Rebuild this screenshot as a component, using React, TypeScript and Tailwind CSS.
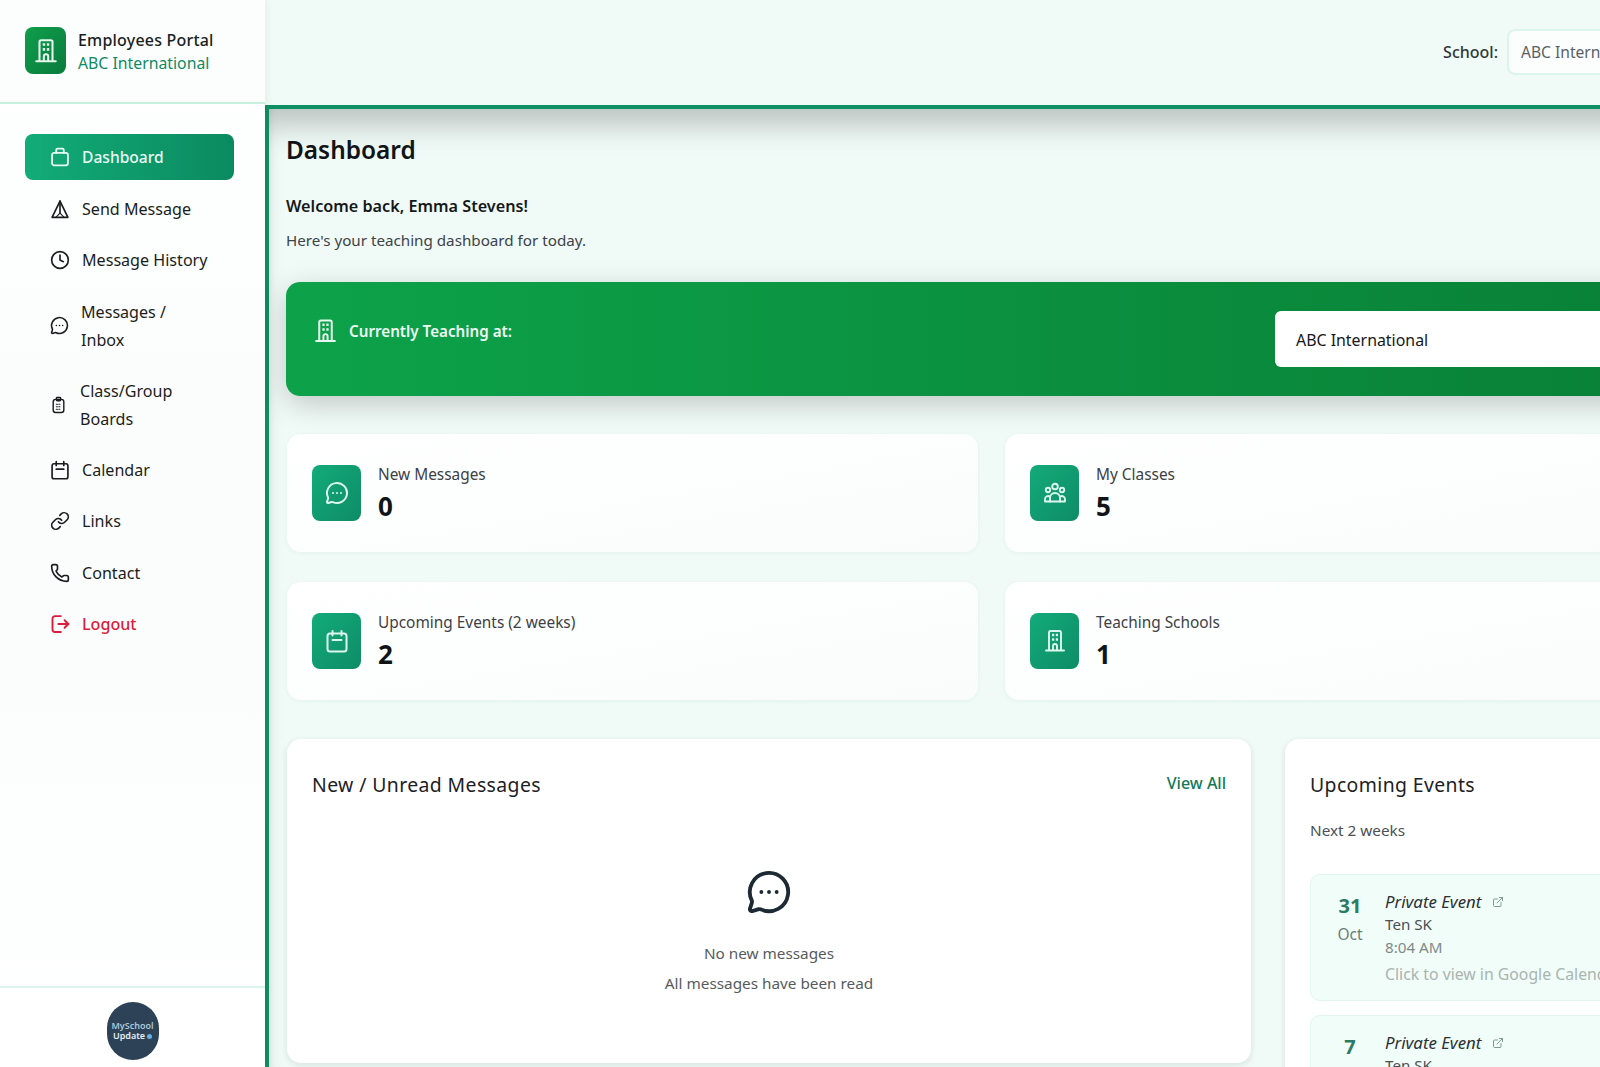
import { Clock, Link, MessageCircleMore, ExternalLink, Phone } from "lucide-react"

function BuildingIcon({ className }: { className?: string }) {
  return (
    <svg viewBox="0 0 24 24" fill="none" stroke="currentColor" strokeWidth="1.9" strokeLinecap="round" strokeLinejoin="round" className={className}>
      <path d="M6 21V3.5A1.5 1.5 0 0 1 7.5 2h9A1.5 1.5 0 0 1 18 3.5V21" />
      <path d="M3 21.5h18" />
      <path d="M10 21v-4a2 2 0 0 1 4 0v4" />
      <path d="M9 6h2.2M12.8 6H15M9 10.5h2.2M12.8 10.5H15" strokeWidth="2.4" strokeLinecap="butt" />
    </svg>
  )
}

function BriefcaseIcon({ className }: { className?: string }) {
  return (
    <svg viewBox="0 0 24 24" fill="none" stroke="currentColor" strokeWidth="2.2" strokeLinecap="round" strokeLinejoin="round" className={className}>
      <rect x="2.5" y="7" width="19" height="15" rx="2.5" />
      <path d="M7.5 7V3.5A1.5 1.5 0 0 1 9 2h6a1.5 1.5 0 0 1 1.5 1.5V7" />
    </svg>
  )
}

function SendIcon({ className }: { className?: string }) {
  return (
    <svg viewBox="0 0 24 24" fill="none" stroke="currentColor" strokeWidth="2" strokeLinecap="round" strokeLinejoin="round" className={className}>
      <path d="M12 2.5 2.5 22h19L12 2.5Z" />
      <path d="M12 2.5V17" />
      <path d="m12 17-5 5M12 17l5 5" strokeWidth="1.4" />
    </svg>
  )
}

function CalendarIcon({ className }: { className?: string }) {
  return (
    <svg viewBox="0 0 24 24" fill="none" stroke="currentColor" strokeWidth="2" strokeLinecap="round" strokeLinejoin="round" className={className}>
      <rect x="2.5" y="4.5" width="19" height="18" rx="2.5" />
      <path d="M7.5 2v4.5M16.5 2v4.5" />
      <path d="M7.5 11h9" />
    </svg>
  )
}

function BoardIcon({ className }: { className?: string }) {
  return (
    <svg viewBox="0 0 24 24" fill="none" stroke="currentColor" strokeWidth="2" strokeLinecap="round" strokeLinejoin="round" className={className}>
      <rect x="4.5" y="4" width="15" height="18.5" rx="3.5" />
      <rect x="9" y="1.5" width="6" height="4.5" rx="1" />
      <path d="M9 11h6M9 14.5h6M9 18h6" strokeWidth="1.6" strokeDasharray="1.5 2" />
    </svg>
  )
}

function LogoutIcon({ className }: { className?: string }) {
  return (
    <svg viewBox="0 0 24 24" fill="none" stroke="currentColor" strokeWidth="2.3" strokeLinecap="round" strokeLinejoin="round" className={className}>
      <path d="M13 2.5H6a3 3 0 0 0-3 3v13a3 3 0 0 0 3 3h7" />
      <path d="M10 12h12" />
      <path d="m17.5 7.5 4.5 4.5-4.5 4.5" />
    </svg>
  )
}

function GroupIcon({ className }: { className?: string }) {
  return (
    <svg viewBox="0 0 24 24" fill="none" stroke="currentColor" strokeWidth="1.9" strokeLinecap="round" strokeLinejoin="round" className={className}>
      <circle cx="12" cy="5.5" r="2.8" />
      <circle cx="5" cy="9" r="2.2" />
      <circle cx="19" cy="9" r="2.2" />
      <path d="M7 20.5V17a5 5 0 0 1 10 0v3.5Z" />
      <path d="M7 20.5H2v-2.5a3 3 0 0 1 5-2.2M17 20.5h5v-2.5a3 3 0 0 0-5-2.2" />
    </svg>
  )
}

const navItems = [
  { label: "Send Message", icon: SendIcon, gap: "gap-[12px]", size: "w-[20px] h-[20px]" },
  { label: "Message History", icon: Clock, gap: "gap-[12px]", size: "w-[20px] h-[20px]" },
  { label: "Messages / Inbox", icon: MessageCircleMore, gap: "gap-[12px]", size: "w-[19px] h-[19px]", wrap: true },
  { label: "Class/Group Boards", icon: BoardIcon, gap: "gap-[13px]", size: "w-[17px] h-[20px]", wrap: true },
  { label: "Calendar", icon: CalendarIcon, gap: "gap-[12px]", size: "w-[20px] h-[20px]" },
  { label: "Links", icon: Link, gap: "gap-[12px]", size: "w-[20px] h-[20px]" },
  { label: "Contact", icon: Phone, gap: "gap-[12px]", size: "w-[20px] h-[20px]" },
]

function Sidebar() {
  return (
    <aside className="w-[265px] shrink-0 h-full flex flex-col bg-gradient-to-b from-white via-[#fafdfc] to-white shadow-[2px_0_8px_rgba(0,0,0,0.05)] relative z-10">
      <div className="h-[104px] shrink-0 border-b-2 border-[#c8f0df] flex items-start pl-[25px] pt-[27px] gap-[12px] bg-[#fbfefd]">
        <div className="w-[41px] h-[47px] rounded-[8px] bg-gradient-to-br from-[#0f9f4c] to-[#0a7a3c] flex items-center justify-center text-[#e6f7ee]">
          <BuildingIcon className="w-[26px] h-[28px]" />
        </div>
        <div className="pt-[1px]">
          <div className="text-[16px] leading-[24px] font-medium text-[#1c1f22] tracking-[0.2px]">Employees Portal</div>
          <div className="text-[15.8px] leading-[22px] text-[#0f8a62]">ABC International</div>
        </div>
      </div>
      <nav className="flex-1 px-[25px] pt-[30px] flex flex-col">
        <a className="h-[46px] mb-[3px] w-[209px] rounded-[8px] bg-gradient-to-r from-[#12ac78] to-[#0b8a60] flex items-center pl-[25px] pt-[2px] gap-[12px] text-[#e8fbf3] text-[15.6px] font-medium">
          <BriefcaseIcon className="w-[20px] h-[20px] -mt-[2px]" />
          Dashboard
        </a>
        {navItems.map((item) => (
          <a
            key={item.label}
            className={`w-[209px] flex items-center pl-[25px] ${item.gap} text-[16.1px] text-[#1a1d20] ${item.wrap ? "min-h-[79px]" : "h-[51.5px]"}`}
          >
            <item.icon className={`${item.size} shrink-0`} strokeWidth={2} />
            <span className={item.wrap ? "w-[110px] leading-[28px]" : ""}>{item.label}</span>
          </a>
        ))}
        <a className="w-[209px] h-[51.5px] flex items-center pl-[25px] gap-[12px] text-[16.1px] font-medium text-[#dc1c3a]">
          <LogoutIcon className="w-[20px] h-[20px]" />
          Logout
        </a>
      </nav>
      <div className="h-[81px] shrink-0 border-t-2 border-[#dcf5ea] flex justify-center pt-[14px] bg-white">
        <div className="w-[52px] h-[58px] rounded-full bg-[#2d4257] flex flex-col items-center justify-center text-[9px] leading-[10px] font-semibold">
          <span className="text-[#a9c6da]">MySchool</span>
          <span className="flex items-center gap-[2px] text-[#e4eef4]">
            Update
            <span className="w-[5px] h-[5px] rounded-full bg-[#5fb3e8]" />
          </span>
        </div>
      </div>
    </aside>
  )
}

function StatCard({ label, value, icon: Icon }: { label: string; value: string; icon: React.ComponentType<{ className?: string }> }) {
  return (
    <div className="h-[118px] rounded-[14px] bg-gradient-to-br from-white to-[#fafcfc] shadow-[0_1px_4px_rgba(20,120,90,0.06)] flex items-center pl-[25px] gap-[17px]">
      <div className="w-[49px] h-[56px] rounded-[8px] bg-gradient-to-br from-[#13ab79] to-[#0e8c66] flex items-center justify-center text-[#def7ee]">
        <Icon className="w-[24px] h-[24px]" />
      </div>
      <div className="pt-[1px]">
        <div className="text-[15.4px] leading-[24px] text-[#3c4146]">{label}</div>
        <div className="text-[26px] leading-[38px] font-bold text-[#111417]">{value}</div>
      </div>
    </div>
  )
}

function EventCard({ day, month }: { day: string; month: string }) {
  return (
    <div className="h-[127px] shrink-0 rounded-[10px] bg-[#f1fdf8] border border-[#e3f6ee] flex pl-[20px] pt-[17px]">
      <div className="w-[38px] text-center mr-[16px]">
        <div className="text-[20px] leading-[28px] font-bold text-[#2f7a62]">{day}</div>
        <div className="text-[15.5px] leading-[28px] text-[#6b7f78]">{month}</div>
      </div>
      <div>
        <div className="flex items-center gap-[11px] text-[16.8px] leading-[20px] italic text-[#2b3035]">
          Private Event
          <ExternalLink className="w-[12px] h-[12px] text-[#7f9c90]" />
        </div>
        <div className="text-[15.2px] leading-[24px] text-[#4a5055]">Ten SK</div>
        <div className="text-[15.2px] leading-[22px] text-[#7f8a88]">8:04 AM</div>
        <div className="text-[15.8px] leading-[33px] text-[#aab4b1] whitespace-nowrap">Click to view in Google Calendar</div>
      </div>
    </div>
  )
}

export default function App() {
  return (
    <div className="w-[1600px] h-[1067px] overflow-hidden flex bg-[#f0faf7] font-['Noto_Sans','Open_Sans',sans-serif]">
      <Sidebar />
      <div className="w-[1460px] shrink-0 h-full flex flex-col">
        <header className="h-[105px] shrink-0 flex items-start justify-end pr-[24px] pt-[29px] gap-[9px] bg-[#f0faf7]">
          <span className="text-[16px] leading-[46px] font-medium text-[#30373c]">School:</span>
          <div className="w-[194px] h-[46px] rounded-[8px] bg-[#fbfefd] border-2 border-[#dcf5ea] pl-[12px] text-[15.6px] leading-[42px] text-[#5a6166]">
            ABC International
          </div>
        </header>
        <main className="flex-1 min-h-0 border-t-4 border-l-4 border-[#0f8f64] pl-[18px] pt-[21px] bg-[#f0faf7] shadow-[inset_0_30px_30px_-14px_rgba(0,0,0,0.22),inset_8px_0_10px_-8px_rgba(0,0,0,0.08)]">
          <div className="w-[1409px]">
            <h1 className="-ml-[1px] text-[24.4px] leading-[40px] font-semibold text-[#111417]">Dashboard</h1>
            <p className="-ml-[1px] mt-[24px] text-[16.2px] leading-[24px] font-semibold text-[#15181b]">Welcome back, Emma Stevens!</p>
            <p className="-ml-[1px] mt-[10px] text-[15.2px] leading-[24px] text-[#3d4348]">Here's your teaching dashboard for today.</p>
            <section className="-ml-[1px] mt-[30px] h-[114px] rounded-[14px] bg-gradient-to-r from-[#0da24a] to-[#098036] shadow-[0_8px_30px_rgba(0,0,0,0.2)] flex items-start pl-[27px] pr-[21px] pt-[29px]">
              <BuildingIcon className="w-[25px] h-[28px] mt-[6px] text-[#e8f8ee]" />
              <span className="ml-[11px] mt-[6px] text-[15.2px] leading-[28px] font-semibold text-[#eefaf2]">Currently Teaching at:</span>
              <div className="ml-auto w-[400px] h-[56px] rounded-[6px] bg-white pl-[21px] pt-[1px] text-[15.9px] leading-[56px] text-[#15181b]">
                ABC International
              </div>
            </section>
            <section className="mt-[38px] grid grid-cols-2 gap-x-[27px] gap-y-[30px]">
              <StatCard label="New Messages" value="0" icon={MessageCircleMore} />
              <StatCard label="My Classes" value="5" icon={GroupIcon} />
              <StatCard label="Upcoming Events (2 weeks)" value="2" icon={CalendarIcon} />
              <StatCard label="Teaching Schools" value="1" icon={BuildingIcon} />
            </section>
            <section className="mt-[39px] flex gap-[34px] items-start">
              <div className="w-[964px] h-[324px] rounded-[14px] bg-white shadow-[0_2px_6px_rgba(0,60,40,0.12)] px-[25px] pt-[30px] flex flex-col">
                <div className="flex justify-between items-center">
                  <h2 className="text-[19.4px] leading-[32px] text-[#1c2125] tracking-[0.4px]">New / Unread Messages</h2>
                  <a className="text-[16px] font-medium text-[#0f7a5a] -mt-[4px]">View All</a>
                </div>
                <div className="flex flex-col items-center pt-[68px]">
                  <MessageCircleMore className="w-[46px] h-[46px] text-[#1d2a35]" strokeWidth={2} />
                  <p className="mt-[23px] text-[15.3px] leading-[30px] text-[#555b60]">No new messages</p>
                  <p className="text-[15.3px] leading-[30px] text-[#555b60]">All messages have been read</p>
                </div>
              </div>
              <div className="w-[411px] h-[340px] rounded-t-[14px] bg-white shadow-[0_2px_6px_rgba(0,60,40,0.12)] px-[25px] pt-[30px] flex flex-col">
                <div className="flex justify-between items-center">
                  <h2 className="text-[19.4px] leading-[32px] text-[#1c2125] tracking-[0.4px]">Upcoming Events</h2>
                  <a className="text-[16px] font-medium text-[#0f7a5a] -mt-[4px]">View All</a>
                </div>
                <p className="mt-[17px] text-[15.3px] leading-[24px] text-[#4a5055]">Next 2 weeks</p>
                <div className="mt-[32px] flex flex-col gap-[14px]">
                  <EventCard day="31" month="Oct" />
                  <EventCard day="7" month="Nov" />
                </div>
              </div>
            </section>
          </div>
        </main>
      </div>
    </div>
  )
}
